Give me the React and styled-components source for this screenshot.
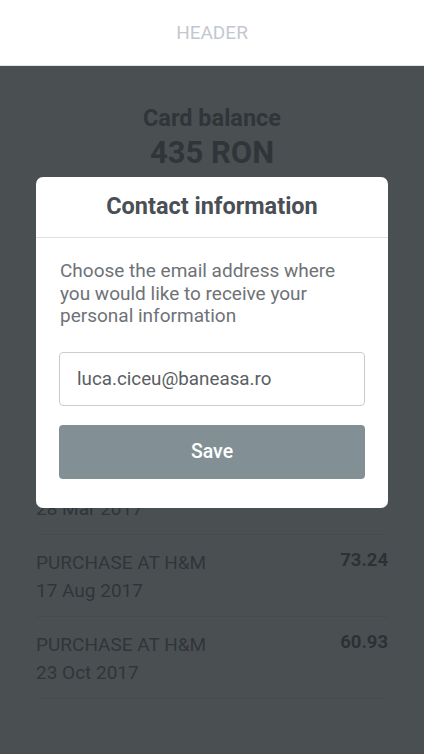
import React from "react";
import styled, { createGlobalStyle } from "styled-components";

const Global = createGlobalStyle`
  html, body { margin: 0; padding: 0; }
  body { font-family: Roboto, "Liberation Sans", sans-serif; background: #ffffff; }
  * { box-sizing: border-box; }
`;

const Screen = styled.div`
  width: 424px;
  height: 754px;
  display: flex;
  flex-direction: column;
  overflow: hidden;
  background: #ffffff;
`;

const Header = styled.header`
  height: 66px;
  flex: none;
  display: flex;
  align-items: center;
  justify-content: center;
  border-bottom: 1px solid #e3e6ea;
  color: #c3c8d0;
  font-size: 19px;
  padding-bottom: 1px;
`;

const Body = styled.main`
  position: relative;
  flex: 1;
  display: flex;
  flex-direction: column;
  padding: 0 36px;
`;

const Balance = styled.section`
  display: flex;
  flex-direction: column;
  align-items: center;
  gap: 3px;
  padding-top: 38px;
  margin-bottom: 36px;
  color: #4b5056;
`;

const BalanceLabel = styled.div`
  font-size: 23.5px;
  font-weight: 700;
  line-height: 28px;
`;

const BalanceValue = styled.div`
  font-size: 31px;
  font-weight: 700;
  line-height: 36px;
`;

const List = styled.ul`
  list-style: none;
  margin: 0;
  padding: 0;
`;

const Item = styled.li`
  display: flex;
  justify-content: space-between;
  align-items: flex-start;
  height: 82px;
  padding-top: 14px;
  border-bottom: 1px solid #dfe2e6;
`;

const ItemText = styled.div`
  display: flex;
  flex-direction: column;
  font-size: 19px;
  line-height: 28px;
  color: #50555a;
`;

const Amount = styled.div`
  font-size: 18.5px;
  font-weight: 700;
  line-height: 22px;
  color: #30353a;
`;

const Overlay = styled.div`
  position: absolute;
  inset: 0;
  background: rgba(42, 48, 52, 0.85);
  display: flex;
  flex-direction: column;
  align-items: center;
  padding-top: 111px;
`;

const Modal = styled.div`
  width: 352px;
  background: #ffffff;
  border-radius: 7px;
  display: flex;
  flex-direction: column;
`;

const ModalTitle = styled.h2`
  margin: 0;
  height: 61px;
  display: flex;
  align-items: center;
  justify-content: center;
  font-size: 23.5px;
  font-weight: 700;
  color: #4a4f55;
  border-bottom: 1px solid #dde1e6;
  padding-bottom: 3px;
`;

const ModalBody = styled.div`
  padding: 22px 23px 29px;
  display: flex;
  flex-direction: column;
`;

const Prompt = styled.p`
  margin: 0 0 24px;
  padding-left: 1px;
  font-size: 19px;
  line-height: 22.5px;
  color: #6e7277;
`;

const EmailInput = styled.input`
  height: 54px;
  width: 100%;
  border: 1px solid #c9cdd2;
  border-radius: 4px;
  padding: 0 17px;
  font-family: Roboto, "Liberation Sans", sans-serif;
  font-size: 18.8px;
  color: #595e63;
  outline: none;
  margin-bottom: 19px;
`;

const SaveButton = styled.button`
  height: 54px;
  width: 100%;
  border: none;
  border-radius: 4px;
  background: #829096;
  color: #ffffff;
  font-family: Roboto, "Liberation Sans", sans-serif;
  font-size: 19.5px;
  font-weight: 500;
`;

const items = [
  { title: "PURCHASE AT H&M", date: "12 Jan 2017", amount: "120.50" },
  { title: "PURCHASE AT H&M", date: "03 Feb 2017", amount: "45.10" },
  { title: "PURCHASE AT H&M", date: "15 Mar 2017", amount: "88.00" },
  { title: "PURCHASE AT H&M", date: "28 Mar 2017", amount: "32.70" },
  { title: "PURCHASE AT H&M", date: "17 Aug 2017", amount: "73.24" },
  { title: "PURCHASE AT H&M", date: "23 Oct 2017", amount: "60.93" },
];

export default function App() {
  return (
    <>
      <Global />
      <Screen>
        <Header>HEADER</Header>
        <Body>
          <Balance>
            <BalanceLabel>Card balance</BalanceLabel>
            <BalanceValue>435 RON</BalanceValue>
          </Balance>
          <List>
            {items.map((it, i) => (
              <Item key={i}>
                <ItemText>
                  <span>{it.title}</span>
                  <span>{it.date}</span>
                </ItemText>
                <Amount>{it.amount}</Amount>
              </Item>
            ))}
          </List>
          <Overlay>
            <Modal>
              <ModalTitle>Contact information</ModalTitle>
              <ModalBody>
                <Prompt>
                  Choose the email address where you would like to receive your personal information
                </Prompt>
                <EmailInput defaultValue="luca.ciceu@baneasa.ro" />
                <SaveButton>Save</SaveButton>
              </ModalBody>
            </Modal>
          </Overlay>
        </Body>
      </Screen>
    </>
  );
}
